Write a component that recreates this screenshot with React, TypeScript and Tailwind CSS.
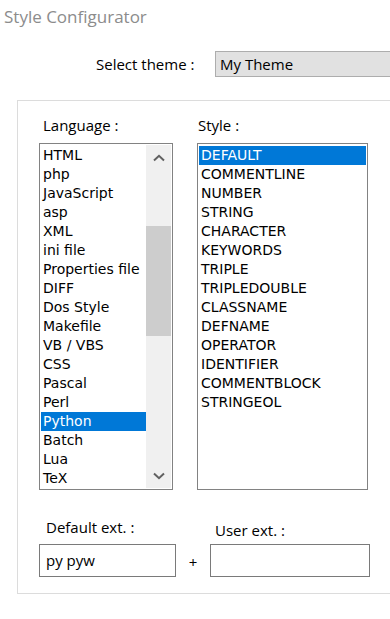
import React from "react";

const langs = ["HTML","php","JavaScript","asp","XML","ini file","Properties file","DIFF","Dos Style","Makefile","VB / VBS","CSS","Pascal","Perl","Python","Batch","Lua","TeX"];
const styles = ["DEFAULT","COMMENTLINE","NUMBER","STRING","CHARACTER","KEYWORDS","TRIPLE","TRIPLEDOUBLE","CLASSNAME","DEFNAME","OPERATOR","IDENTIFIER","COMMENTBLOCK","STRINGEOL"];

const listFont = { fontFamily: "Tahoma, 'DejaVu Sans', sans-serif" };

export default function App() {
  return (
    <div className="w-[390px] h-[619px] bg-white overflow-hidden relative" style={{ fontFamily: "'Segoe UI', 'Open Sans', 'Noto Sans', sans-serif" }}>
      <div className="pl-[4px] pt-[4px] text-[17px] leading-[26px] text-[#8c8c8c]">Style Configurator</div>
      <div className="flex items-center mt-[21px] h-[26px]">
        <div className="w-[215px] pl-[96px] text-[15px] text-black">Select theme :</div>
        <div className="flex-1 h-[26px] bg-[#e1e1e1] border border-[#adadad] border-r-0 pl-[4px] text-[15px] leading-[24px] text-black">My Theme</div>
      </div>
      <div className="ml-[17px] mt-[23px] w-[400px] h-[494px] border border-[#dcdcdc]">
        <div className="flex pt-[14px]">
          <div className="ml-[21px] w-[134px]">
            <div className="pl-[4px] text-[15px] leading-[20px] text-black">Language :</div>
            <div className="mt-[8px] h-[347px] w-[134px] border border-[#828282] flex p-[1px] pt-[2px]" style={listFont}>
              <div className="flex-1 flex flex-col">
                {langs.map((l) => (
                  <div key={l} className={`h-[19px] pl-[2px] text-[14px] leading-[19px] whitespace-nowrap ${l === "Python" ? "bg-[#0078d7] text-white" : "text-black"}`}>{l}</div>
                ))}
              </div>
              <div className="w-[25px] -mt-[1px] bg-[#f0f0f0] flex flex-col">
                <div className="h-[25px] flex items-center justify-center">
                  <svg width="12" height="8" viewBox="0 0 12 8"><path d="M1 6.5 L6 1.8 L11 6.5" fill="none" stroke="#606060" strokeWidth="2" /></svg>
                </div>
                <div className="h-[56px]" />
                <div className="h-[110px] bg-[#cdcdcd]" />
                <div className="flex-1" />
                <div className="h-[25px] flex items-center justify-center">
                  <svg width="12" height="8" viewBox="0 0 12 8"><path d="M1 1.5 L6 6.2 L11 1.5" fill="none" stroke="#606060" strokeWidth="2" /></svg>
                </div>
              </div>
            </div>
          </div>
          <div className="ml-[24px] w-[171px]">
            <div className="pl-[1px] text-[15px] leading-[20px] text-black">Style :</div>
            <div className="mt-[8px] h-[347px] w-[171px] border border-[#828282] p-[1px] pt-[2px]" style={listFont}>
              {styles.map((s) => (
                <div key={s} className={`h-[19px] pl-[2px] text-[14px] leading-[19px] whitespace-nowrap ${s === "DEFAULT" ? "bg-[#0078d7] text-white" : "text-black"}`}>{s}</div>
              ))}
            </div>
          </div>
        </div>
        <div className="flex mt-[27px]">
          <div className="ml-[21px] w-[137px]">
            <div className="pl-[7px] text-[15px] leading-[20px] text-black">Default ext. :</div>
            <div className="mt-[7px] h-[33px] border border-[#7a7a7a] pl-[6px] text-[15px] leading-[30px] text-black">py pyw</div>
          </div>
          <div className="w-[34px] flex items-end justify-center pb-[5px] text-[15px] leading-[20px] text-black">+</div>
          <div className="w-[160px]">
            <div className="pl-[5px] mt-[3px] text-[15px] leading-[20px] text-black">User ext. :</div>
            <div className="mt-[4px] h-[33px] border border-[#7a7a7a]" />
          </div>
        </div>
      </div>
    </div>
  );
}
